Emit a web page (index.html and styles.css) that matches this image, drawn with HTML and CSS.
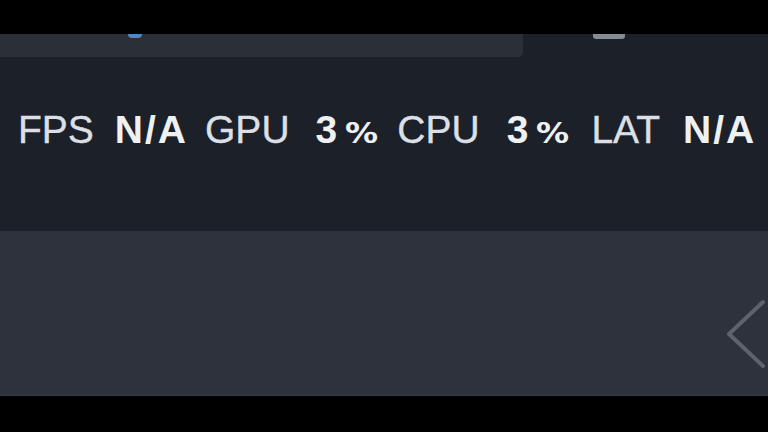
FILE: index.html
```html
<!DOCTYPE html>
<html>
<head>
<meta charset="utf-8">
<link rel="stylesheet" href="styles.css">
</head>
<body>
<div class="screen">
  <div class="letterbox"></div>
  <div class="tabs">
    <div class="tab-active"><span class="tab-dot"></span></div>
    <span class="tab-pill"></span>
  </div>
  <div class="stats">
    <span class="label">FPS</span>
    <span class="value na v-fps">N/A</span>
    <span class="label l-gpu">GPU</span>
    <span class="value num v-gpu">3</span>
    <span class="pct">%</span>
    <span class="label l-cpu">CPU</span>
    <span class="value num v-cpu">3</span>
    <span class="pct">%</span>
    <span class="label l-lat">LAT</span>
    <span class="value na v-lat">N/A</span>
  </div>
  <div class="panel">
    <svg class="chevron" width="44" height="72" viewBox="0 0 44 72">
      <polyline points="38,3 4,35 38,67" fill="none" stroke="#5d636c" stroke-width="4" stroke-linecap="round" stroke-linejoin="round"/>
    </svg>
  </div>
  <div class="letterbox-bottom"></div>
</div>
</body>
</html>
```

FILE: styles.css
```css
html, body {
  margin: 0;
  padding: 0;
  background: #000;
}
.screen {
  width: 768px;
  height: 432px;
  overflow: hidden;
  display: flex;
  flex-direction: column;
  background: #000;
}
.letterbox {
  height: 34px;
  flex: none;
  background: #000;
}
.tabs {
  height: 23px;
  flex: none;
  display: flex;
  align-items: flex-start;
  background: #1b2029;
}
.tab-active {
  width: 523px;
  height: 23px;
  background: #2a2f38;
  border-bottom-right-radius: 5px;
  display: flex;
  align-items: flex-start;
}
.tab-dot {
  width: 14px;
  height: 4px;
  margin-left: 128px;
  border-radius: 0 0 7px 7px;
  background: #4f86c6;
}
.tab-pill {
  width: 32px;
  height: 5px;
  margin-left: 70px;
  border-radius: 0 0 3px 3px;
  background: #858b93;
}
.stats {
  height: 174px;
  flex: none;
  box-sizing: border-box;
  padding: 53px 0 0 18px;
  background: #1b2029;
  display: flex;
  align-items: baseline;
  font-family: "Liberation Sans", Arial, sans-serif;
  font-size: 39px;
  line-height: 39px;
  white-space: nowrap;
}
.label {
  color: #dcdfe3;
  -webkit-text-stroke: 0.4px #dcdfe3;
}
.value {
  color: #eef0f2;
  font-weight: 700;
}
.na {
  letter-spacing: 2px;
}
.pct {
  display: inline-block;
  color: #eef0f2;
  font-family: "DejaVu Sans", sans-serif;
  font-weight: 700;
  font-size: 28px;
  margin-left: 8px;
  transform: scaleX(1.18);
  transform-origin: left center;
}
.v-fps { margin-left: 21px; }
.l-gpu { margin-left: 17px; }
.v-gpu { margin-left: 26px; }
.l-cpu { margin-left: 24px; }
.v-cpu { margin-left: 27px; }
.l-lat { margin-left: 27px; }
.v-lat { margin-left: 23px; }
.panel {
  height: 165px;
  flex: none;
  background: #2d323c;
  border-bottom: 1px solid #353a44;
  box-sizing: border-box;
  display: flex;
  justify-content: flex-end;
  align-items: flex-start;
  padding-top: 68px;
}
.chevron {
  display: block;
  margin-right: -1px;
}
.letterbox-bottom {
  flex: 1;
  background: #000;
}
```
